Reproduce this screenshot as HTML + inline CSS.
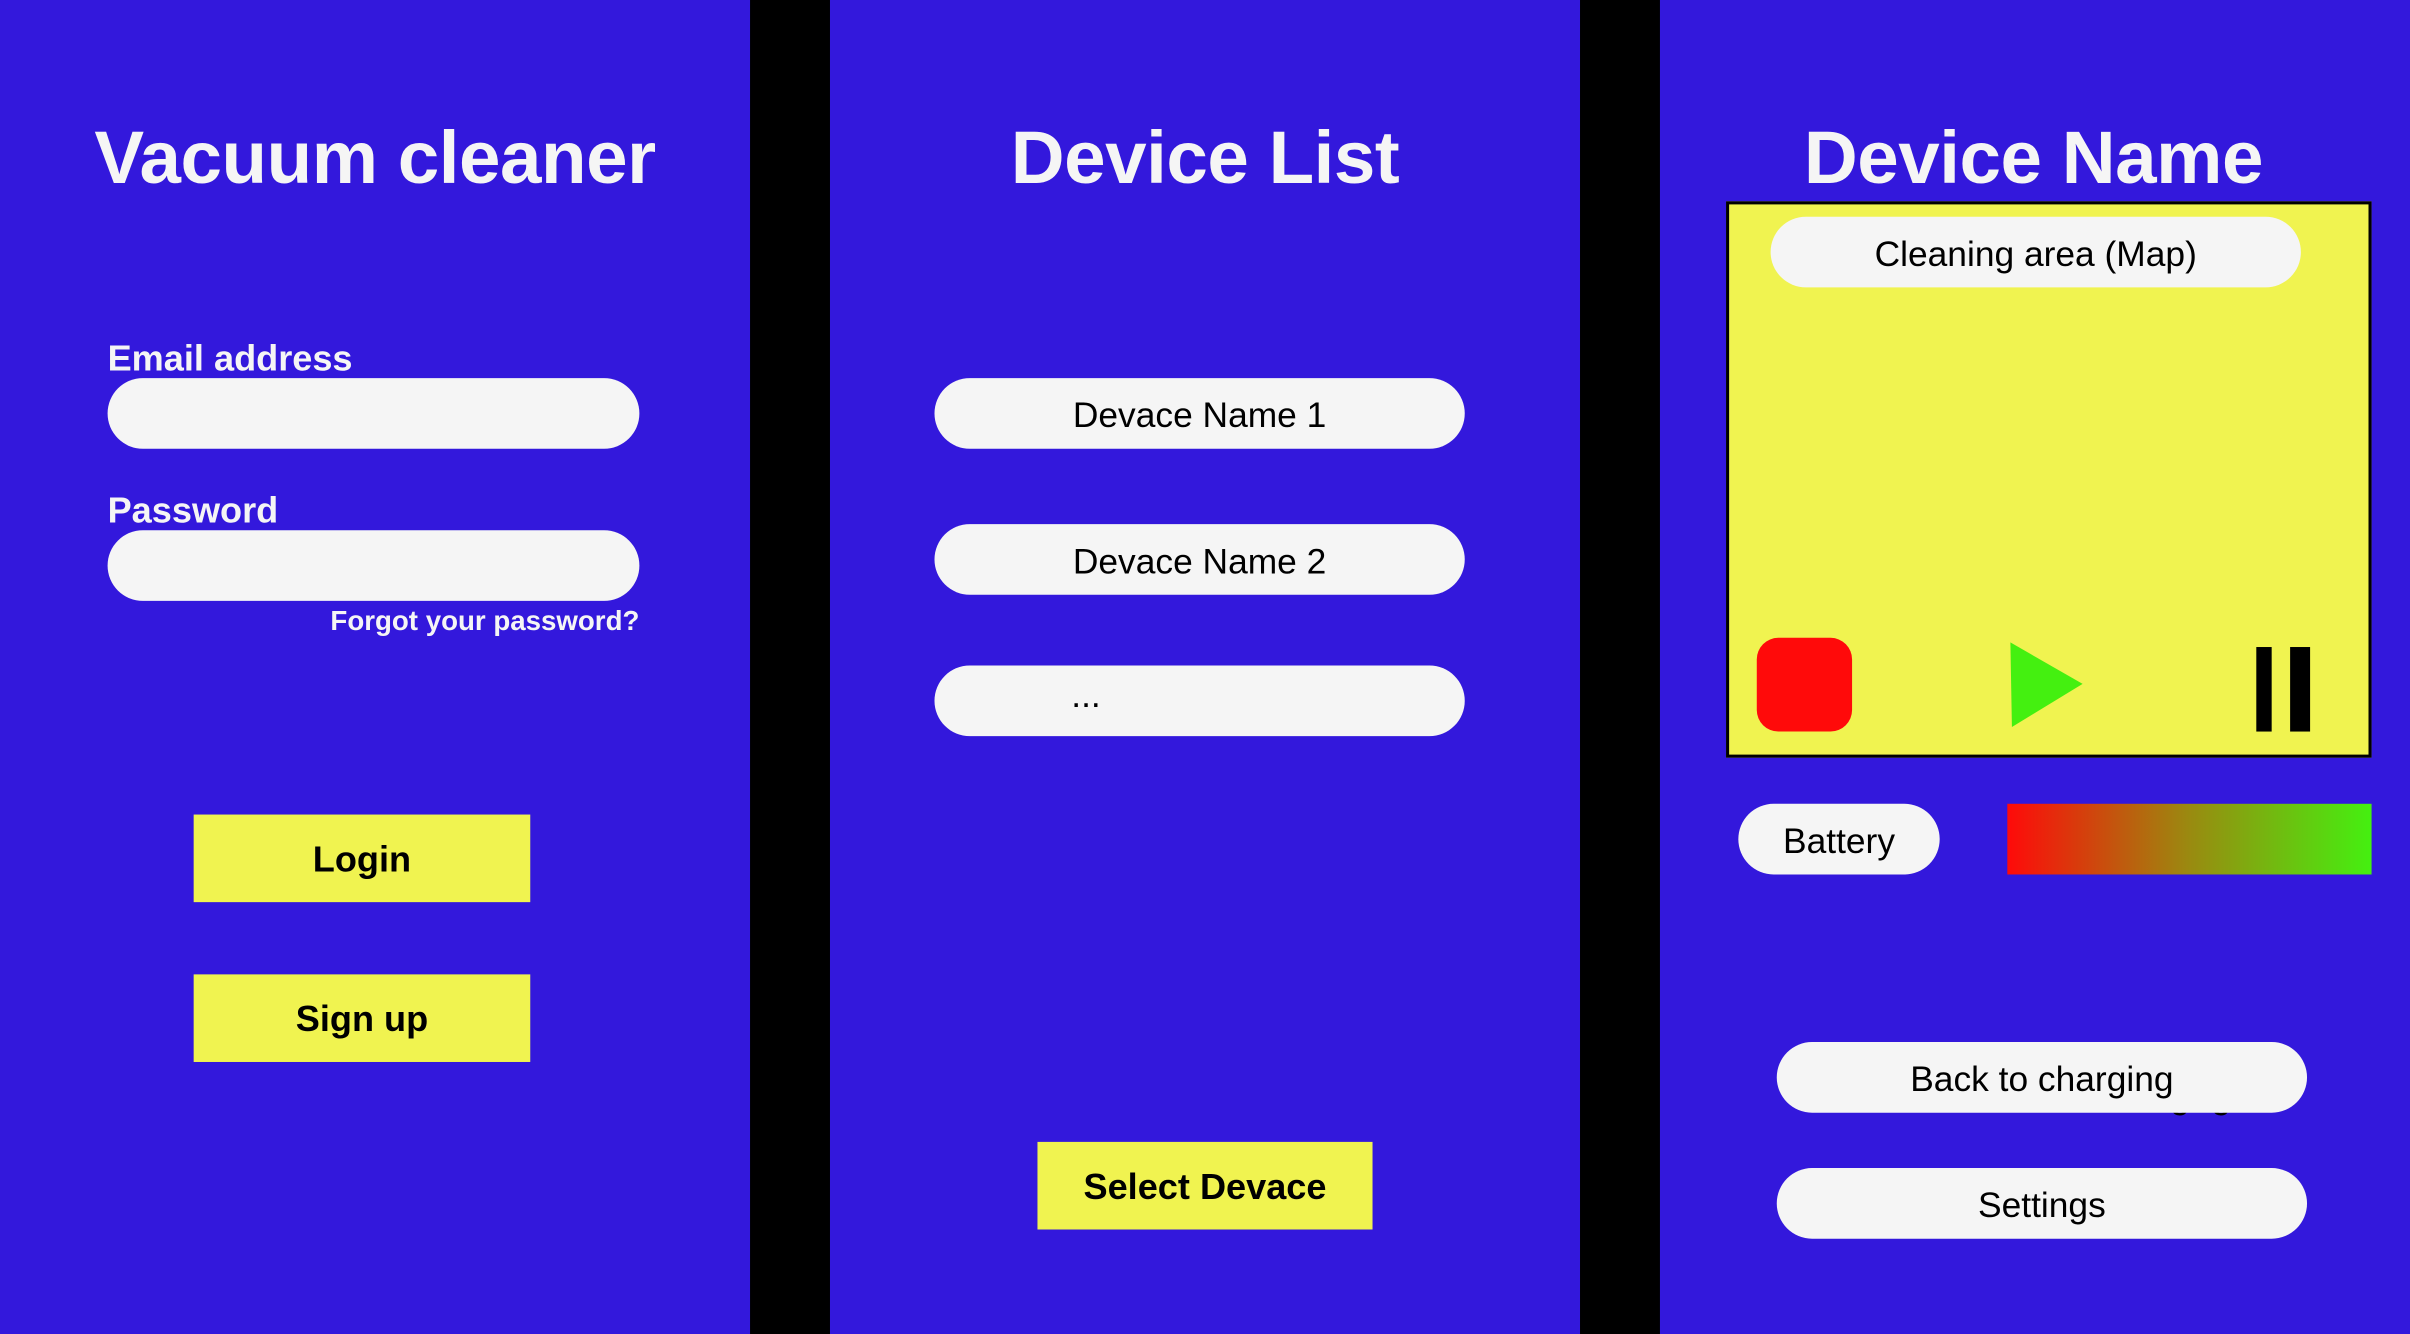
<!DOCTYPE html>
<html><head><meta charset="utf-8"><style>
html,body{margin:0;padding:0;background:#000;width:2410px;height:1334px;overflow:hidden}
#s{position:absolute;left:0;top:0;width:1568px;height:868px;transform:scale(1.53699,1.53687);transform-origin:0 0;background:#000;font-family:"Liberation Sans",sans-serif}
.p{position:absolute;top:0;height:868px;width:488px;background:#3318dc}
.a{position:absolute}
.t{position:absolute;top:72px;width:488px;text-align:center;color:#f5f5f5;font-weight:bold;font-size:48.5px;line-height:62px;letter-spacing:-0.3px}
.pill{position:absolute;background:#f5f5f5;border-radius:23px;height:46px;font-size:23px;line-height:48px;text-align:center;color:#000}
.btn{position:absolute;background:#f0f350;height:57px;font-size:23.5px;font-weight:bold;line-height:58px;text-align:center;color:#000}
.lbl{position:absolute;color:#f5f5f5;font-weight:bold;font-size:23.5px;line-height:26px}
</style></head><body><div id="s">
<div class="p" style="left:0">
 <div class="t">Vacuum cleaner</div>
 <div class="lbl" style="left:70px;top:220px">Email address</div>
 <div class="pill" style="left:70px;top:246px;width:346px"></div>
 <div class="lbl" style="left:70px;top:319px">Password</div>
 <div class="pill" style="left:70px;top:345px;width:346px"></div>
 <div class="lbl" style="left:150px;width:266px;text-align:right;top:393px;font-size:18px;line-height:22px">Forgot your password?</div>
 <div class="btn" style="left:126px;top:530px;width:219px">Login</div>
 <div class="btn" style="left:126px;top:634px;width:219px">Sign up</div>
</div>
<div class="p" style="left:540px">
 <div class="t">Device List</div>
 <div class="pill" style="left:68px;top:246px;width:345px">Devace Name 1</div>
 <div class="pill" style="left:68px;top:341px;width:345px">Devace Name 2</div>
 <div class="pill" style="left:68px;top:433px;width:345px;text-align:left"><span style="position:absolute;left:89px;top:-5px">...</span></div>
 <div class="btn" style="left:135px;top:743px;width:218px">Select Devace</div>
</div>
<div class="p" style="left:1080px">
 <div class="t" style="left:0px;width:486px">Device Name</div>
 <div class="a" style="left:43px;top:131px;width:416px;height:358px;background:#f0f350;border:2px solid #000"></div>
 <div class="pill" style="left:72px;top:141px;width:345px">Cleaning area (Map)</div>
 <div class="a" style="left:63px;top:415px;width:62px;height:61px;background:#ff0a0a;border-radius:14px"></div>
 <svg class="a" style="left:226px;top:416px" width="50" height="60"><polygon points="2,2 49,29 3,57" fill="#44f010"/></svg>
 <div class="a" style="left:388px;top:421px;width:10px;height:55px;background:#000"></div>
 <div class="a" style="left:410px;top:421px;width:13px;height:55px;background:#000"></div>
 <div class="pill" style="left:51px;top:523px;width:131px">Battery</div>
 <div class="a" style="left:226px;top:523px;width:237px;height:46px;background:linear-gradient(90deg,#ff0a0a,#9a8a10 50%,#44f010)"></div>
 <div class="a" style="left:332px;top:700px;font-size:23px;color:#000;letter-spacing:14px">gg</div>
 <div class="pill" style="left:76px;top:678px;width:345px">Back to charging</div>
 <div class="pill" style="left:76px;top:760px;width:345px">Settings</div>
</div>
</div></body></html>
